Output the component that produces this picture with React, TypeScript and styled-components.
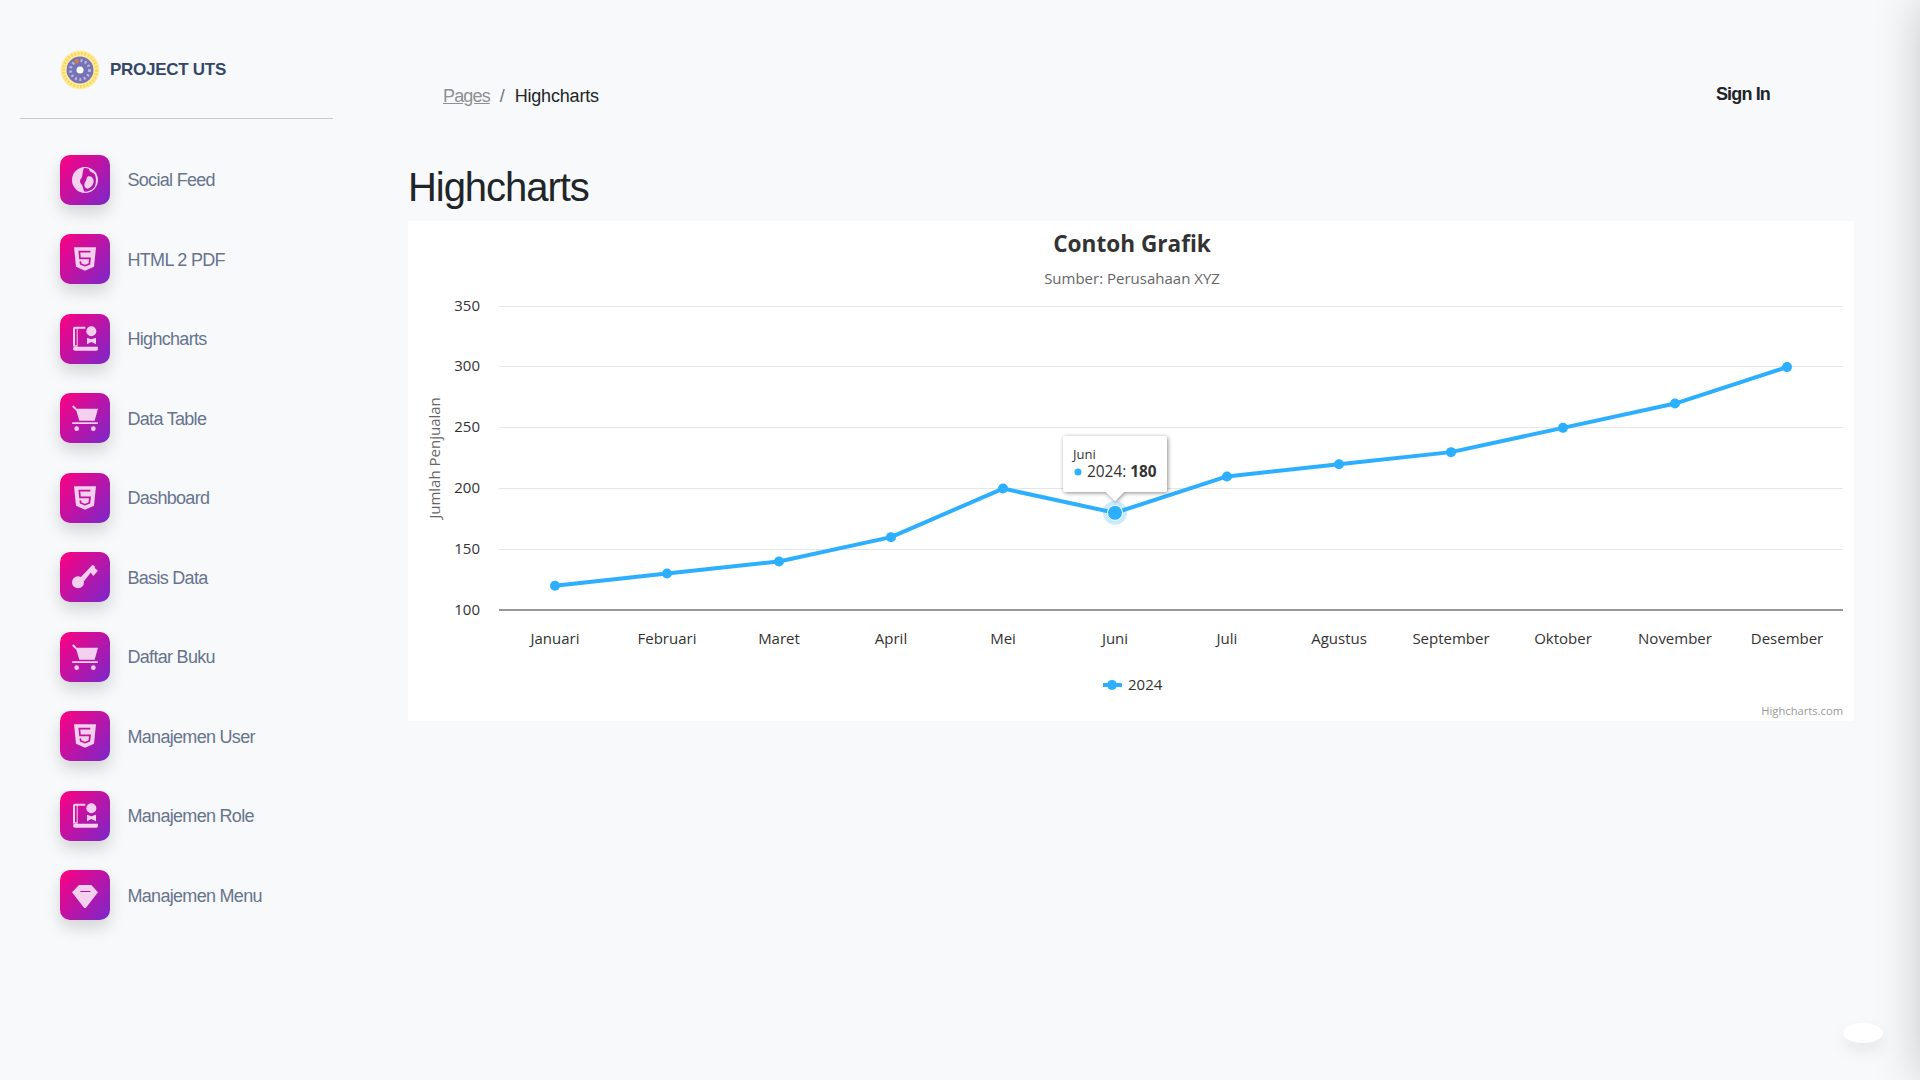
import React from 'react'
import styled, { createGlobalStyle } from 'styled-components'

const GlobalStyle = createGlobalStyle`
  html, body {
    margin: 0;
    height: 100%;
    overflow: hidden;
    background: #f8f9fa;
    font-family: "Liberation Sans", Arial, sans-serif;
  }
`

const Page = styled.div`
  display: flex;
  min-height: 100vh;
`

const Sidebar = styled.aside`
  flex: 0 0 408px;
  padding: 50px 75px 0 20px;
  box-sizing: border-box;
`

const Brand = styled.div`
  display: flex;
  align-items: center;
  gap: 10px;
  padding: 0 0 28px 40px;
  border-bottom: 1px solid #c6c8ca;
`

const BrandName = styled.span`
  font-size: 17px;
  font-weight: 700;
  letter-spacing: -0.27px;
  color: #344767;
`

const Nav = styled.nav`
  display: flex;
  flex-direction: column;
  gap: 29.5px;
  padding: 35.95px 0 0 40px;
`

const NavItem = styled.a`
  display: flex;
  align-items: center;
  gap: 17.5px;
  font-size: 18px;
  letter-spacing: -0.7px;
  color: #67748e;
`

const NavLabel = styled.span`
  padding-top: 1.2px;
`

const IconBox = styled.span`
  display: flex;
  align-items: center;
  justify-content: center;
  width: 50px;
  height: 50px;
  border-radius: 10px;
  background: linear-gradient(310deg, #7928ca, #ff0080);
  box-shadow: 0 8px 16px rgba(0, 0, 0, 0.15);

  svg {
    width: 26px;
    height: 26px;
    fill: #f5cfee;
  }
`

const Main = styled.main`
  flex: 1;
  min-width: 0;
  padding: 0 66px 0 0;
`

const TopBar = styled.header`
  display: flex;
  align-items: center;
  justify-content: space-between;
  padding: 84px 84px 0 35px;
  height: 22px;
`

const Crumbs = styled.div`
  display: flex;
  gap: 10px;
  padding-top: 2px;
  font-size: 18px;
  letter-spacing: -0.18px;
  color: #212529;
`

const CrumbLink = styled.a`
  color: #8e9094;
  letter-spacing: -0.85px;
  text-decoration: underline;
`

const CrumbSep = styled.span`
  color: #6c757d;
`

const SignIn = styled.a`
  margin-top: -2px;
  font-size: 18px;
  font-weight: 700;
  letter-spacing: -0.85px;
  color: #212529;
`

const Title = styled.h1`
  margin: 58px 0 0;
  height: 57px;
  font-size: 40px;
  line-height: 47px;
  font-weight: 400;
  letter-spacing: -1.05px;
  color: #212529;
`

const ChartCard = styled.section`
  height: 500px;
  background: #fff;

  svg {
    display: block;
    font-family: "Open Sans", "Noto Sans", sans-serif;
  }
`

const ConfigPanel = styled.div`
  position: fixed;
  top: 0;
  right: -360px;
  width: 360px;
  height: 100vh;
  background: #fff;
  box-shadow: 0 0 45px rgba(0, 0, 0, 0.2);
`

const ConfigButton = styled.div`
  position: fixed;
  top: 1023px;
  left: 1843px;
  width: 40px;
  height: 20px;
  border-radius: 50%;
  background: #fff;
  box-shadow: 0 8px 16px rgba(0, 0, 0, 0.08);
`

const CUT = '#c4129f'

const GlobeIcon = () => (
  <svg viewBox="0 0 78 78">
    <path
      fillRule="evenodd"
      d="M39 0a39 39 0 1 0 0 78a39 39 0 0 0 0-78zM36 3C44 2 52 4 52 10C55 16 62 15 68 22C73 30 73 50 68 60C60 70 48 74 38 74C32 68 34 60 30 54C24 48 22 42 26 36C32 32 30 26 32 18C33 12 34 8 36 3z"
    />
    <path d="M48 28C57 26 64 32 65 42C65 52 57 62 47 65C40 65 37 60 37 54C37 47 41 44 43 38C44 33 45 30 48 28z" />
  </svg>
)

const HtmlIcon = () => (
  <svg viewBox="0 0 78 78">
    <path d="M6 4h66l-6 58l-27 12l-27-12z" />
    <path
      d="M55 17H22l2 20h30l-2 17l-13 5l-13-5l-1-8"
      fill="none"
      stroke={CUT}
      strokeWidth="5"
    />
  </svg>
)

const BookIcon = () => (
  <svg viewBox="0 0 78 78">
    <path d="M3 8a6 6 0 0 1 6-6h31v6H9v50h5V8h3v54H9a6 6 0 0 0-6 0z" />
    <path d="M3 68a6 6 0 0 1 6-6h69v7a5 5 0 0 1-5 5H9a6 6 0 0 1-6-6z" />
    <circle cx="58" cy="16" r="15" />
    <path d="M45 35l13 5l14-5v20l-14-7l-13 7z" />
  </svg>
)

const CartIcon = () => (
  <svg viewBox="0 0 78 78">
    <path d="M0 5l5-4l9 10h64l-10 36H22L13 17z" />
    <rect x="0" y="52" width="78" height="5" rx="2" />
    <circle cx="14" cy="71" r="7" />
    <circle cx="64" cy="71" r="7" />
  </svg>
)

const KeyIcon = () => (
  <svg viewBox="0 0 78 78">
    <circle cx="18" cy="55" r="18" />
    <path d="M24 42L62 2L70 8L36 52z" />
    <path d="M52 20L64 8L78 20L64 36z" />
  </svg>
)

const GemIcon = () => (
  <svg viewBox="0 0 78 78">
    <path
      fillRule="evenodd"
      d="M21 9h37l20 22L43 76a5 5 0 0 1-8 0L0 31zM25 27v3h30v-3z"
    />
  </svg>
)

const navItems = [
  { label: 'Social Feed', icon: <GlobeIcon /> },
  { label: 'HTML 2 PDF', icon: <HtmlIcon /> },
  { label: 'Highcharts', icon: <BookIcon /> },
  { label: 'Data Table', icon: <CartIcon /> },
  { label: 'Dashboard', icon: <HtmlIcon /> },
  { label: 'Basis Data', icon: <KeyIcon /> },
  { label: 'Daftar Buku', icon: <CartIcon /> },
  { label: 'Manajemen User', icon: <HtmlIcon /> },
  { label: 'Manajemen Role', icon: <BookIcon /> },
  { label: 'Manajemen Menu', icon: <GemIcon /> },
]

const Logo = () => (
  <svg width="40" height="40" viewBox="0 0 40 40">
    <circle cx="20" cy="20" r="19.5" fill="#ffeb9e" />
    <circle cx="20" cy="20" r="16.5" fill="none" stroke="#f9d65e" strokeWidth="3" strokeDasharray="2 1.4" />
    <circle cx="20" cy="20" r="13.5" fill="#7674b6" />
    <circle cx="20" cy="20" r="9.5" fill="none" stroke="#b9b8dc" strokeWidth="3" strokeDasharray="2 2.5" />
    <path d="M14 11l4-2l1 3l-3 2z" fill="#dd7a3a" />
    <circle cx="20" cy="20" r="3.5" fill="#fff" />
  </svg>
)

const months = [
  'Januari', 'Februari', 'Maret', 'April', 'Mei', 'Juni',
  'Juli', 'Agustus', 'September', 'Oktober', 'November', 'Desember',
]
const values = [120, 130, 140, 160, 200, 180, 210, 220, 230, 250, 270, 300]
const ticks = [
  { label: '350', y: 85.5 },
  { label: '300', y: 145.5 },
  { label: '250', y: 206.5 },
  { label: '200', y: 267.5 },
  { label: '150', y: 328.5 },
]

const BLUE = '#2caffe'
const pointX = (i: number) => 91 + 56 + i * 112
const pointY = (v: number) => 389 - (v - 100) * 1.2144

const Chart = () => {
  const points = values.map((v, i) => `${pointX(i)},${pointY(v)}`).join(' ')
  return (
    <svg width="1446" height="500" viewBox="0 0 1446 500">
      <defs>
        <filter id="tip" x="-20%" y="-20%" width="140%" height="140%">
          <feDropShadow dx="1" dy="1" stdDeviation="2" floodColor="#000" floodOpacity="0.45" />
        </filter>
      </defs>
      <text x="724" y="31" textAnchor="middle" fontSize="22.6" fontWeight="700" fill="#333">
        Contoh Grafik
      </text>
      <text x="724" y="63" textAnchor="middle" fontSize="15" fill="#666">
        Sumber: Perusahaan XYZ
      </text>
      <text transform="translate(32 237) rotate(-90)" textAnchor="middle" fontSize="15" fill="#666">
        Jumlah Penjualan
      </text>
      {ticks.map((t) => (
        <g key={t.label}>
          <line x1="91" x2="1435" y1={t.y} y2={t.y} stroke="#e6e6e6" />
          <text x="72" y={t.y + 4} textAnchor="end" fontSize="15" fill="#333">
            {t.label}
          </text>
        </g>
      ))}
      <text x="72" y="394" textAnchor="end" fontSize="15" fill="#333">
        100
      </text>
      <line x1="91" x2="1435" y1="389" y2="389" stroke="#333" />
      {months.map((m, i) => (
        <text key={m} x={pointX(i)} y="423" textAnchor="middle" fontSize="15" fill="#333">
          {m}
        </text>
      ))}
      <polyline points={points} fill="none" stroke={BLUE} strokeWidth="4" strokeLinejoin="round" />
      {values.map((v, i) => (
        <circle key={months[i]} cx={pointX(i)} cy={pointY(v)} r="5" fill={BLUE} />
      ))}
      <circle cx={pointX(5)} cy={pointY(180)} r="12" fill={BLUE} fillOpacity="0.25" />
      <circle cx={pointX(5)} cy={pointY(180)} r="7.5" fill={BLUE} stroke="#fff" />
      <path
        d="M658 215h98a3 3 0 0 1 3 3v50a3 3 0 0 1-3 3h-40l-9 9l-9-9h-40a3 3 0 0 1-3-3v-50a3 3 0 0 1 3-3z"
        fill="#fff"
        filter="url(#tip)"
      />
      <text x="665" y="238" fontSize="13" fill="#333">Juni</text>
      <circle cx="670" cy="251" r="3.5" fill={BLUE} />
      <text x="679" y="256" fontSize="15.4" fill="#333">
        2024: <tspan fontWeight="700">180</tspan>
      </text>
      <line x1="695" x2="714" y1="464" y2="464" stroke={BLUE} strokeWidth="4" />
      <circle cx="704" cy="464" r="5" fill={BLUE} />
      <text x="720" y="469" fontSize="15" fill="#333">2024</text>
      <text x="1435" y="494" textAnchor="end" fontSize="11.2" fill="#999">Highcharts.com</text>
    </svg>
  )
}

export default function App() {
  return (
    <Page>
      <GlobalStyle />
      <Sidebar>
        <Brand>
          <Logo />
          <BrandName>PROJECT UTS</BrandName>
        </Brand>
        <Nav>
          {navItems.map((item) => (
            <NavItem key={item.label}>
              <IconBox>{item.icon}</IconBox>
              <NavLabel>{item.label}</NavLabel>
            </NavItem>
          ))}
        </Nav>
      </Sidebar>
      <Main>
        <TopBar>
          <Crumbs>
            <CrumbLink>Pages</CrumbLink>
            <CrumbSep>/</CrumbSep>
            <span>Highcharts</span>
          </Crumbs>
          <SignIn>Sign In</SignIn>
        </TopBar>
        <Title>Highcharts</Title>
        <ChartCard>
          <Chart />
        </ChartCard>
      </Main>
      <ConfigPanel />
      <ConfigButton />
    </Page>
  )
}
